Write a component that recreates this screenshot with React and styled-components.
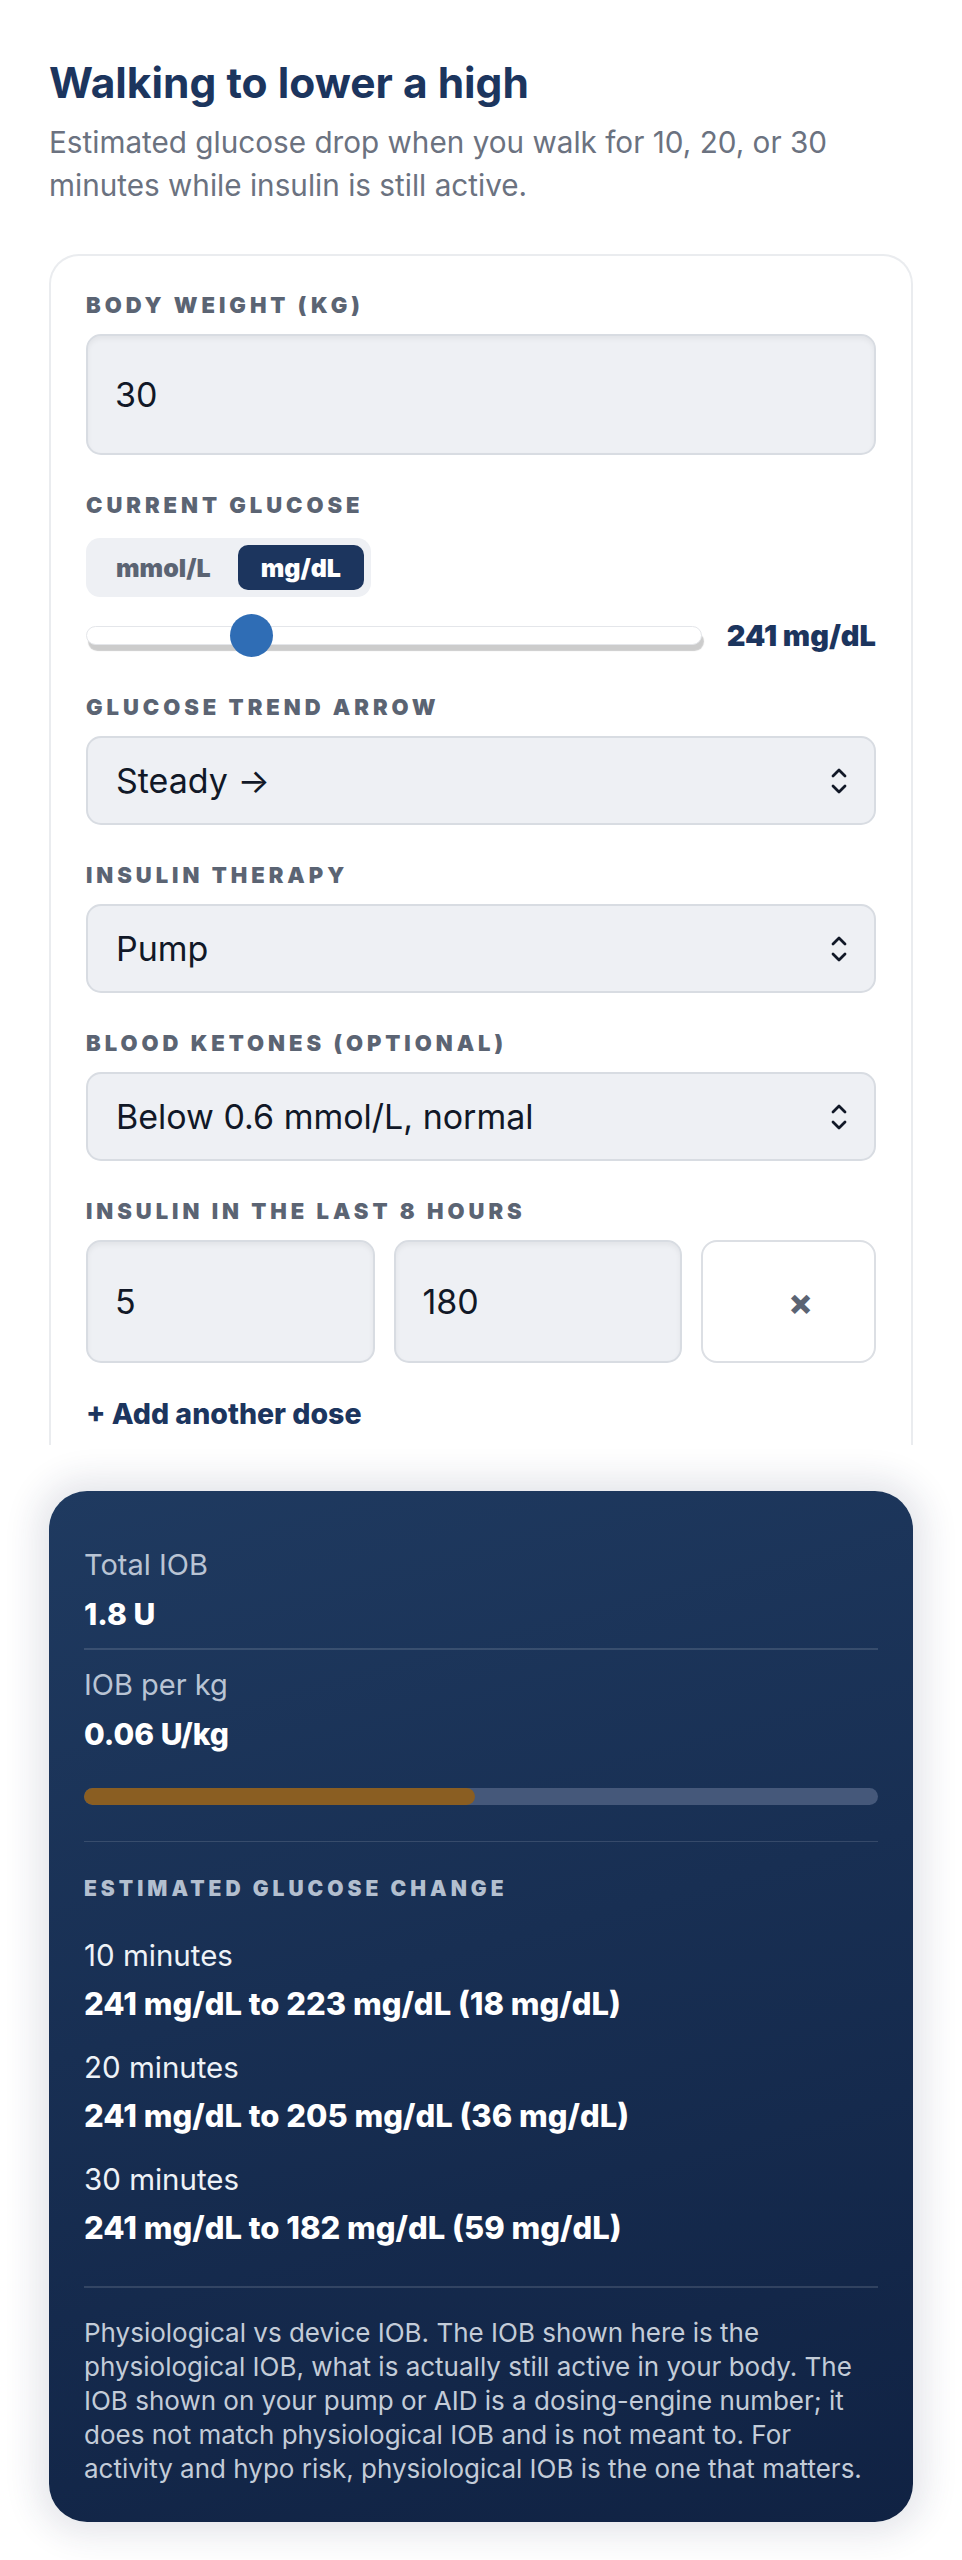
import React from "react";
import styled, { createGlobalStyle } from "styled-components";

const GlobalStyle = createGlobalStyle`
  * { box-sizing: border-box; }
  body {
    margin: 0;
    background: #ffffff;
    font-family: Inter, "Noto Sans", "Liberation Sans", sans-serif;
    -webkit-font-smoothing: antialiased;
  }
`;

const Chevrons = () => (
  <svg width="16" height="28" viewBox="0 0 16 28" fill="none" stroke="#111827" strokeWidth="2.8" strokeLinecap="round" strokeLinejoin="round">
    <polyline points="2,9 8,3 14,9" />
    <polyline points="2,19 8,25 14,19" />
  </svg>
);

const App = () => {
  return (
    <Page>
      <GlobalStyle />
      <Title>Walking to lower a high</Title>
      <Subtitle>
        Estimated glucose drop when you walk for 10, 20, or 30 minutes while insulin is still active.
      </Subtitle>

      <FormCard>
        <Field>
          <Label>Body weight (kg)</Label>
          <TextInput $h={121} defaultValue="30" />
        </Field>

        <Field>
          <Label>Current glucose</Label>
          <UnitToggle>
            <UnitButton>mmol/L</UnitButton>
            <UnitButton $active>mg/dL</UnitButton>
          </UnitToggle>
          <SliderRow>
            <Track>
              <Thumb style={{ left: "164px" }} />
            </Track>
            <SliderValue>241 mg/dL</SliderValue>
          </SliderRow>
        </Field>

        <Field>
          <Label>Glucose trend arrow</Label>
          <SelectBox>
            <span>Steady →</span>
            <Chevrons />
          </SelectBox>
        </Field>

        <Field>
          <Label>Insulin therapy</Label>
          <SelectBox>
            <span>Pump</span>
            <Chevrons />
          </SelectBox>
        </Field>

        <Field>
          <Label>Blood ketones (optional)</Label>
          <SelectBox>
            <span>Below 0.6 mmol/L, normal</span>
            <Chevrons />
          </SelectBox>
        </Field>

        <Field>
          <Label>Insulin in the last 8 hours</Label>
          <DoseRow>
            <TextInput $h={123} defaultValue="5" />
            <TextInput $h={123} defaultValue="180" />
            <RemoveButton>×</RemoveButton>
          </DoseRow>
          <AddLink>+ Add another dose</AddLink>
        </Field>
      </FormCard>

      <ResultCard>
        <StatLabel>Total IOB</StatLabel>
        <StatValue>1.8 U</StatValue>
        <Divider $top={17} $bottom={18} />
        <StatLabel>IOB per kg</StatLabel>
        <StatValue>0.06 U/kg</StatValue>
        <Bar>
          <BarFill style={{ width: "49.3%" }} />
        </Bar>
        <Divider $top={36} $bottom={35} />
        <SectionLabel>Estimated glucose change</SectionLabel>
        <Minutes $first>10 minutes</Minutes>
        <Change>241 mg/dL to 223 mg/dL (18 mg/dL)</Change>
        <Minutes>20 minutes</Minutes>
        <Change>241 mg/dL to 205 mg/dL (36 mg/dL)</Change>
        <Minutes>30 minutes</Minutes>
        <Change>241 mg/dL to 182 mg/dL (59 mg/dL)</Change>
        <Divider $top={41} $bottom={28} />
        <Note>
          Physiological vs device IOB. The IOB shown here is the physiological IOB, what is actually still
          active in your body. The IOB shown on your pump or AID is a dosing-engine number; it does not
          match physiological IOB and is not meant to. For activity and hypo risk, physiological IOB is
          the one that matters.
        </Note>
      </ResultCard>
    </Page>
  );
};

const Page = styled.div`
  padding: 59px 49px 38px;
`;

const Title = styled.h1`
  margin: 0;
  font-size: 42.5px;
  line-height: 48px;
  font-weight: 700;
  color: #1c355e;
`;

const Subtitle = styled.p`
  margin: 14px 0 0;
  font-size: 29.7px;
  line-height: 43px;
  color: #6b7280;
`;

const FormCard = styled.div`
  margin-top: 47px;
  border: 2px solid #eaecef;
  border-bottom: none;
  border-radius: 30px 30px 0 0;
  padding: 37px 35px 15px;
`;

const Field = styled.div`
  display: flex;
  flex-direction: column;
  & + & {
    margin-top: 38px;
  }
`;

const Label = styled.div`
  font-size: 22px;
  line-height: 25px;
  font-weight: 900;
  letter-spacing: 0.18em;
  text-transform: uppercase;
  color: #5b6473;
  margin-bottom: 16px;
`;

const TextInput = styled.input`
  width: 100%;
  height: ${(p) => p.$h}px;
  padding: 0 27px;
  background: #eef0f4;
  border: 2px solid #d8dce2;
  border-radius: 15px;
  box-shadow: inset 0 3px 5px rgba(0, 0, 0, 0.05);
  font-family: inherit;
  font-size: 34px;
  color: #111827;
  outline: none;
`;

const UnitToggle = styled.div`
  align-self: flex-start;
  display: flex;
  gap: 4px;
  margin-top: 4px;
  padding: 7px;
  background: #eef0f4;
  border-radius: 14px;
`;

const UnitButton = styled.div`
  height: 45px;
  padding: 0 23px;
  display: flex;
  align-items: center;
  border-radius: 10px;
  font-size: 25px;
  font-weight: 900;
  background: ${(p) => (p.$active ? "#1c355e" : "transparent")};
  color: ${(p) => (p.$active ? "#ffffff" : "#5b6473")};
`;

const SliderRow = styled.div`
  display: flex;
  align-items: center;
  gap: 25px;
  height: 43px;
  margin-top: 17px;
`;

const Track = styled.div`
  position: relative;
  flex: 1;
  height: 19px;
  background: #ffffff;
  border: 1px solid #e4e6ea;
  border-radius: 10px;
  box-shadow: 2px 6px 1px rgba(0, 0, 0, 0.2);
`;

const Thumb = styled.div`
  position: absolute;
  top: 50%;
  width: 43px;
  height: 43px;
  margin-left: -21px;
  margin-top: -21.5px;
  border-radius: 50%;
  background: #2f6db5;
`;

const SliderValue = styled.div`
  font-size: 29px;
  font-weight: 900;
  color: #1c355e;
  white-space: nowrap;
`;

const SelectBox = styled.div`
  height: 89px;
  display: flex;
  align-items: center;
  justify-content: space-between;
  padding: 0 27px 0 28px;
  background: #eef0f4;
  border: 2px solid #d8dce2;
  border-radius: 15px;
  font-size: 34px;
  color: #111827;
`;

const DoseRow = styled.div`
  display: grid;
  grid-template-columns: 1fr 1fr 175px;
  gap: 19px;
`;

const RemoveButton = styled.div`
  display: flex;
  align-items: center;
  justify-content: center;
  padding-left: 24px;
  background: #ffffff;
  border: 2px solid #dcdfe4;
  border-radius: 16px;
  font-size: 36px;
  font-weight: 800;
  color: #5b6473;
`;

const AddLink = styled.div`
  margin-top: 35px;
  font-size: 28.5px;
  line-height: 32px;
  font-weight: 800;
  color: #1c355e;
`;

const ResultCard = styled.div`
  margin-top: 46px;
  padding: 57px 35px 36px;
  border-radius: 38px;
  background: linear-gradient(165deg, #1f3a60 0%, #182f53 45%, #102243 100%);
  box-shadow: 0 0 34px 12px rgba(30, 45, 80, 0.12);
  color: #ffffff;
`;

const StatLabel = styled.div`
  font-size: 29px;
  line-height: 33px;
  color: #b9c4d4;
`;

const StatValue = styled.div`
  margin-top: 17px;
  font-size: 30px;
  line-height: 33px;
  font-weight: 800;
  color: #ffffff;
`;

const Divider = styled.div`
  height: 1.5px;
  background: rgba(255, 255, 255, 0.13);
  margin: ${(p) => p.$top}px 0 ${(p) => p.$bottom}px;
`;

const Bar = styled.div`
  margin-top: 37px;
  height: 17px;
  border-radius: 9px;
  background: #45587a;
  overflow: hidden;
`;

const BarFill = styled.div`
  height: 100%;
  border-radius: 9px;
  background: #8a5e22;
`;

const SectionLabel = styled.div`
  font-size: 21px;
  line-height: 24px;
  font-weight: 900;
  letter-spacing: 0.19em;
  text-transform: uppercase;
  color: #b3bfcf;
`;

const Minutes = styled.div`
  margin-top: ${(p) => (p.$first ? 38 : 30)}px;
  font-size: 29.5px;
  line-height: 33px;
  color: #eef2f7;
`;

const Change = styled.div`
  margin-top: 15px;
  font-size: 31px;
  line-height: 34px;
  font-weight: 800;
  color: #ffffff;
`;

const Note = styled.p`
  margin: 0;
  font-size: 26px;
  line-height: 34px;
  color: #c3ccd8;
`;

export default App;
